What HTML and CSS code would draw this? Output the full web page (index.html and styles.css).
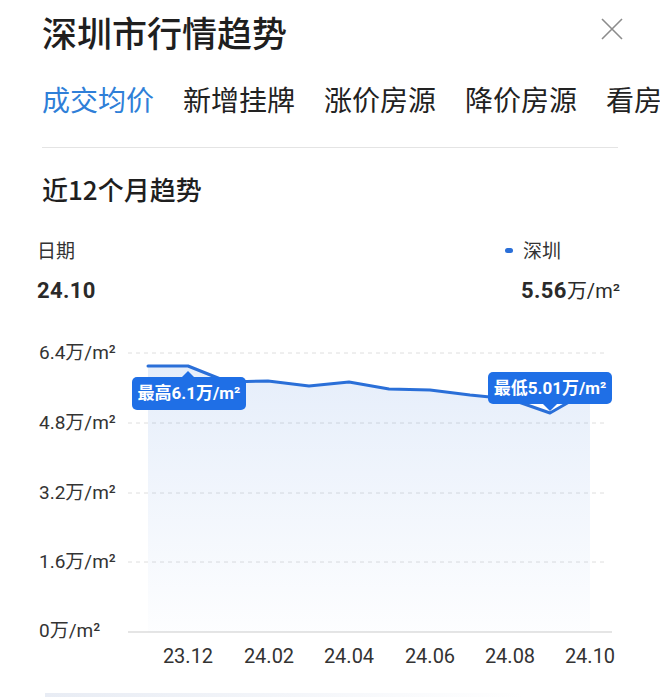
FILE: index.html
```html
<!DOCTYPE html>
<html lang="zh-CN">
<head>
    <meta charset="utf-8">
    <title>深圳市行情趋势</title>
    <link rel="stylesheet" href="styles.css">
</head>
<body>
    <div class="page">
        <div class="header">
            <h1 class="title">深圳市行情趋势</h1>
            <svg class="close" width="22" height="22" viewBox="0 0 22 22">
                <path d="M1 1 L21 21 M21 1 L1 21" stroke="#8c8c8c" stroke-width="1.6" fill="none"/>
            </svg>
        </div>

        <div class="tabs">
            <div class="tab active">成交均价</div>
            <div class="tab">新增挂牌</div>
            <div class="tab">涨价房源</div>
            <div class="tab">降价房源</div>
            <div class="tab">看房</div>
        </div>
        <div class="divider"></div>

        <h2 class="section-title">近12个月趋势</h2>

        <div class="info-row">
            <div class="info-left">
                <div class="info-label">日期</div>
                <div class="info-value">24.10</div>
            </div>
            <div class="info-right">
                <div class="info-label legend"><span class="legend-dot"></span>深圳</div>
                <div class="info-value price">5.56<span class="unit">万/m²</span></div>
            </div>
        </div>
    </div>

    <div class="chart">
        <svg class="chart-svg" width="660" height="370" viewBox="0 320 660 370">
            <defs>
                <linearGradient id="area" x1="0" y1="0" x2="0" y2="1">
                    <stop offset="0" stop-color="#2a6fd8" stop-opacity="0.12"/>
                    <stop offset="1" stop-color="#2a6fd8" stop-opacity="0.01"/>
                </linearGradient>
            </defs>

            <g class="grid">
                <line x1="128" y1="353" x2="608" y2="353"/>
                <line x1="128" y1="423" x2="608" y2="423"/>
                <line x1="128" y1="493" x2="608" y2="493"/>
                <line x1="128" y1="562" x2="608" y2="562"/>
            </g>
            <line class="axis" x1="128" y1="632" x2="612" y2="632"/>

            <polygon fill="url(#area)" points="148,366 188,366 228,382 268,381 309,386 349,382 389,389 430,390 470,395 510,399 550,413 590,390 590,632 148,632"/>
            <polyline class="trend" points="148,366 188,366 228,382 268,381 309,386 349,382 389,389 430,390 470,395 510,399 550,413 590,390"/>

            <g class="y-labels">
                <text x="39" y="359">6.4万/m²</text>
                <text x="39" y="429">4.8万/m²</text>
                <text x="39" y="499">3.2万/m²</text>
                <text x="39" y="568">1.6万/m²</text>
                <text x="39" y="637">0万/m²</text>
            </g>

            <g class="x-labels">
                <text x="188" y="663">23.12</text>
                <text x="269" y="663">24.02</text>
                <text x="349" y="663">24.04</text>
                <text x="430" y="663">24.06</text>
                <text x="510" y="663">24.08</text>
                <text x="590" y="663">24.10</text>
            </g>
        </svg>

        <div class="tip tip-max">最高<b>6.1</b>万/m²</div>
        <div class="tip tip-min">最低<b>5.01</b>万/m²</div>
    </div>

    <div class="bottom-strip"></div>
</body>
</html>
```

FILE: styles.css
```css
* {
    margin: 0;
    padding: 0;
    box-sizing: border-box;
}

body {
    width: 660px;
    height: 697px;
    overflow: hidden;
    background: #fff;
    font-family: Roboto, "Noto Sans CJK SC", sans-serif;
    color: #222;
}

.page {
    padding-left: 42px;
}

.header {
    display: flex;
    justify-content: space-between;
    align-items: flex-start;
    padding-right: 37px;
    margin-top: 8px;
}

.title {
    font-family: "Noto Sans CJK SC", sans-serif;
    font-size: 35px;
    font-weight: 500;
    line-height: 48px;
    color: #1f1f1f;
}

.close {
    margin-top: 10px;
    display: block;
}

.tabs {
    display: flex;
    gap: 29px;
    margin-top: 23px;
    white-space: nowrap;
    overflow: hidden;
}

.tab {
    font-family: "Noto Sans CJK SC", sans-serif;
    font-size: 28px;
    line-height: 40px;
    color: #222;
    flex-shrink: 0;
}

.tab.active {
    color: #2f7fd8;
}

.divider {
    height: 1px;
    background: #e4e4e4;
    margin-top: 28px;
    margin-right: 42px;
}

.section-title {
    font-family: "Noto Sans CJK SC", sans-serif;
    font-size: 26px;
    font-weight: 500;
    line-height: 36px;
    color: #1f1f1f;
    margin-top: 23px;
}

.info-row {
    display: flex;
    justify-content: space-between;
    margin-top: 29px;
    margin-left: -5px;
    padding-right: 40px;
}

.info-label {
    font-family: "Noto Sans CJK SC", sans-serif;
    font-size: 19px;
    line-height: 28px;
    color: #333;
}

.info-value {
    font-size: 22px;
    font-weight: 700;
    line-height: 30px;
    color: #2a2a2a;
    margin-top: 12px;
    letter-spacing: 0.4px;
}

.legend {
    display: flex;
    align-items: center;
}

.legend-dot {
    width: 8px;
    height: 5px;
    border-radius: 3px;
    background: #2a6fd8;
    margin-right: 10px;
}

.price {
    padding-left: 16px;
}

.unit {
    font-weight: 400;
    font-size: 20px;
    letter-spacing: 0;
}

.chart {
    position: relative;
    margin-top: 14px;
    height: 370px;
}

.chart-svg {
    display: block;
}

.grid line {
    stroke: #dedede;
    stroke-width: 1;
    stroke-dasharray: 4 4;
}

.axis {
    stroke: #dcdcdc;
    stroke-width: 1.5;
}

.trend {
    fill: none;
    stroke: #2a6fd8;
    stroke-width: 3;
    stroke-linejoin: round;
    stroke-linecap: round;
}

.y-labels text {
    font-family: Roboto, "Noto Sans CJK SC", sans-serif;
    font-size: 19px;
    fill: #333;
}

.x-labels text {
    font-family: Roboto, sans-serif;
    font-size: 20px;
    fill: #333;
    text-anchor: middle;
}

.tip {
    position: absolute;
    background: #1f6fe6;
    color: #fff;
    font-size: 17px;
    font-weight: 700;
    line-height: 33px;
    height: 33px;
    border-radius: 5px;
    white-space: nowrap;
    text-align: center;
    font-family: Roboto, "Noto Sans CJK SC", sans-serif;
}

.tip b {
    font-weight: 700;
}

.tip-max {
    left: 132px;
    top: 57px;
    width: 114px;
}

.tip-max::before {
    content: '';
    position: absolute;
    left: 50px;
    top: -6px;
    border-left: 6px solid transparent;
    border-right: 6px solid transparent;
    border-bottom: 6px solid #1f6fe6;
}

.tip-min {
    left: 488px;
    top: 52px;
    width: 124px;
    height: 32px;
    line-height: 32px;
}

.tip-min::after {
    content: '';
    position: absolute;
    left: 55px;
    bottom: -7px;
    border-left: 7px solid transparent;
    border-right: 7px solid transparent;
    border-top: 7px solid #1f6fe6;
}

.bottom-strip {
    margin-left: 45px;
    margin-top: 3px;
    width: 480px;
    height: 4px;
    background: linear-gradient(to right, #e8ecf4, rgba(232, 236, 244, 0));
}
```
